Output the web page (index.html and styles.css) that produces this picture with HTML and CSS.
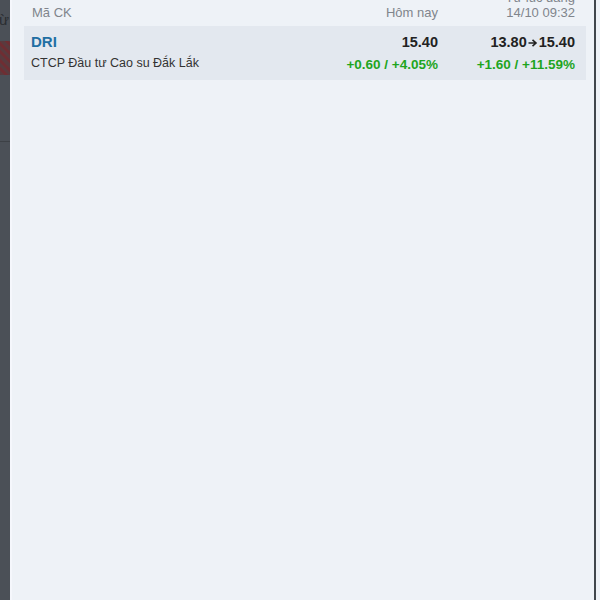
FILE: index.html
```html
<!DOCTYPE html>
<html lang="vi">
<head>
    <meta charset="UTF-8">
    <meta name="viewport" content="width=device-width, initial-scale=1.0">
    <title>Cổ phiếu được nhắc đến</title>
    <link rel="stylesheet" href="styles.css">
</head>
<body>
    <div class="page">
        <div class="backdrop">
            <span class="backdrop-char">ừ</span>
            <div class="backdrop-pic"></div>
            <div class="backdrop-line"></div>
        </div>

        <div class="panel">
            <div class="stock-list">
                <div class="list-head">
                    <div class="col col-code">Mã CK</div>
                    <div class="col col-today">Hôm nay</div>
                    <div class="col col-since">Từ lúc đăng<br>14/10 09:32</div>
                </div>

                <div class="stock-row">
                    <div class="col col-code">
                        <div class="code">DRI</div>
                        <div class="name">CTCP Đầu tư Cao su Đắk Lắk</div>
                    </div>
                    <div class="col col-today">
                        <div class="price">15.40</div>
                        <div class="change up">+0.60 / +4.05%</div>
                    </div>
                    <div class="col col-since">
                        <div class="price">13.80<svg class="arrow" width="10" height="10" viewBox="0 0 10 10"><path d="M0.5 5H7.5M4.5 1.8L8 5L4.5 8.2" fill="none" stroke="#222" stroke-width="1.6"/></svg>15.40</div>
                        <div class="change up">+1.60 / +11.59%</div>
                    </div>
                </div>
            </div>
        </div>

        <div class="edge"></div>
    </div>
</body>
</html>
```

FILE: styles.css
```css
html, body {
    margin: 0;
    height: 100%;
}
body {
    font-family: "Liberation Sans", Arial, sans-serif;
    background-color: #eef2f7;
    overflow: hidden;
}
.page {
    display: flex;
    height: 600px;
}
.backdrop {
    width: 10px;
    background-color: #4b5057;
    overflow: hidden;
    flex-shrink: 0;
}
.backdrop-char {
    display: block;
    margin: 11px 0 0 -1px;
    font-size: 15px;
    line-height: 18px;
    color: #2a2d31;
}
.backdrop-pic {
    height: 34px;
    margin-top: 12px;
    background: repeating-linear-gradient(45deg, #5a3a3e 0 3px, #6e2e33 3px 6px);
}
.backdrop-line {
    height: 1px;
    margin-top: 66px;
    background-color: #3d4146;
}
.panel {
    flex: 1;
    border-left: 2px solid #f5f7fc;
    overflow: hidden;
}
.edge {
    width: 2px;
    background-color: #41464c;
    margin-right: 4px;
    flex-shrink: 0;
}
.stock-list {
    margin: -10px 8px 0 12px;
}
.list-head {
    display: flex;
    align-items: flex-end;
    padding: 0 11px 0 8px;
    margin-bottom: 6px;
    font-size: 13px;
    line-height: 15px;
    color: #80858c;
}
.stock-row {
    display: flex;
    height: 54px;
    box-sizing: border-box;
    padding: 6px 11px 0 7px;
    background-color: #e3e8ef;
}
.col-code {
    flex: 1;
}
.col-today {
    width: 110px;
    text-align: right;
}
.col-since {
    width: 137px;
    text-align: right;
}
.code {
    font-size: 15px;
    line-height: 20px;
    font-weight: bold;
    color: #1f6fa3;
}
.name {
    font-size: 12.5px;
    line-height: 23px;
    color: #333;
}
.price {
    font-size: 14.5px;
    line-height: 20px;
    font-weight: bold;
    color: #222;
}
.arrow {
    margin: 0 1px;
    vertical-align: -1px;
}
.change {
    font-size: 13.5px;
    line-height: 26px;
    font-weight: bold;
}
.up {
    color: #1ea51e;
}
```
